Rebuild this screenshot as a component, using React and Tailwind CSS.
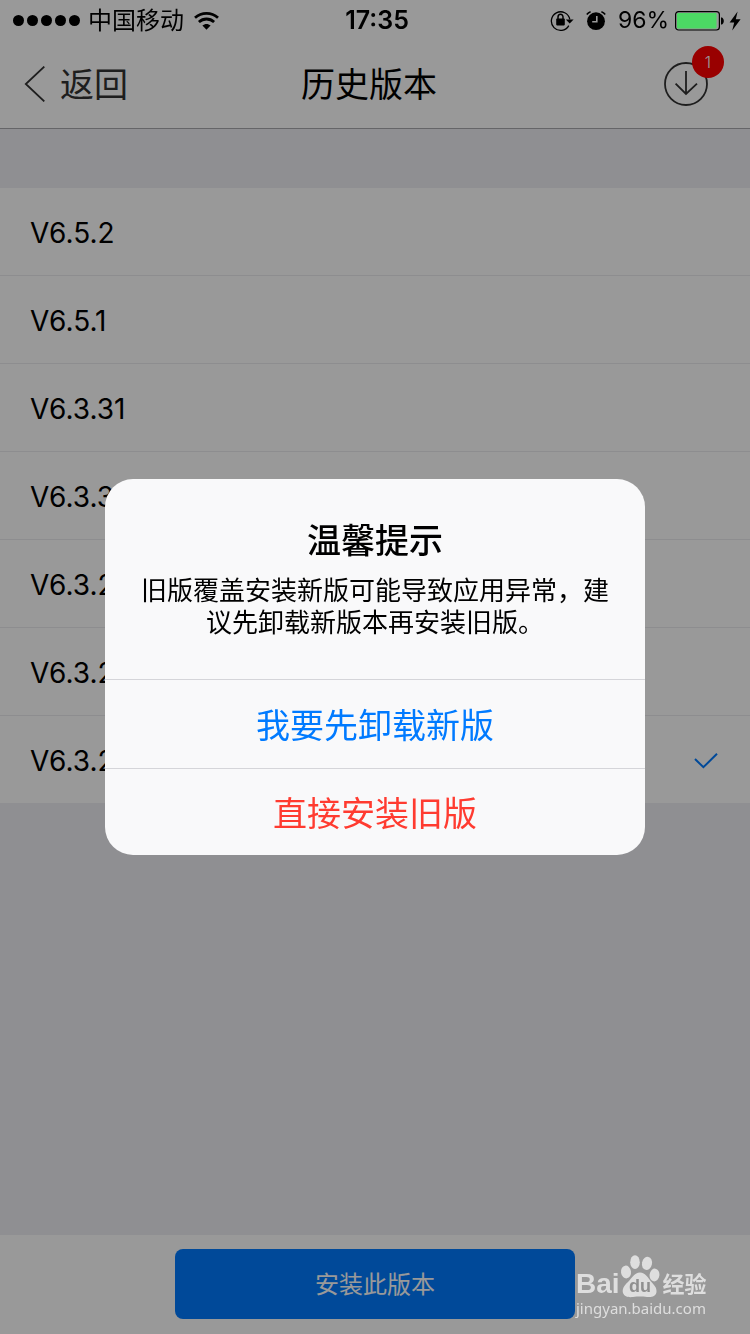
// App.jsx
const versions = ['V6.5.2', 'V6.5.1', 'V6.3.31', 'V6.3.30', 'V6.3.24', 'V6.3.23', 'V6.3.21'];
const installed = 'V6.3.21';

const StatusBar = () => {
    return (
        <div className="relative z-20 grid h-10 grid-cols-[1fr_auto_1fr] items-center pl-[13px] pr-[9px] pt-px text-2xl text-black">
            <div className="flex items-center">
                <div className="mr-2 flex gap-[3px]">
                    {[0, 1, 2, 3, 4].map((dot) => (
                        <span key={dot} className="size-[11px] rounded-full bg-black" />
                    ))}
                </div>
                <span>中国移动</span>
                <svg className="ml-[10px] h-[18px] w-[25px]" viewBox="0 0 25 18" fill="none" stroke="black" strokeWidth="2.8">
                    <path d="M1 5.8C7.5 0 17.5 0 24 5.8" />
                    <path d="M4.9 10C9.3 6 15.7 6 20.1 10" />
                    <path d="M8.4 13.6C10.8 11.3 14.2 11.3 16.6 13.6L12.5 17.8Z" fill="black" stroke="none" />
                </svg>
            </div>

            <span className="text-[25px] font-semibold">17:35</span>

            <div className="flex items-center justify-end">
                {/* Rotation lock */}
                <svg className="h-[22px] w-6" viewBox="0 0 24 22" fill="none" stroke="black" strokeWidth="1.3">
                    <path d="M18.8 15.6A9.3 9.3 0 1 1 19.8 9.4" />
                    <path d="M15.8 9.4H23.6L19.7 13.6Z" fill="black" stroke="none" />
                    <rect x="6.2" y="8.6" width="8.6" height="6.8" rx="0.8" fill="black" stroke="none" />
                    <path d="M8 9V7A2.5 2.8 0 0 1 13 7V9" strokeWidth="1.5" />
                </svg>
                {/* Alarm */}
                <svg className="ml-3 h-5 w-5" viewBox="0 0 20 20" fill="none">
                    <circle cx="10" cy="10.200" r="8.9" fill="black" />
                    <path d="M0.8 3.600A8 8 0 0 1 4.600 0.800M19.200 3.600A8 8 0 0 0 15.400 0.800" stroke="black" strokeWidth="1.6" />
                    <path d="M10.800 5V10.800H6.200" stroke="#999999" strokeWidth="1.6" />
                </svg>
                <span className="ml-3 text-[23px]">96%</span>
                {/* Battery */}
                <svg className="ml-[6px] h-5 w-[49px]" viewBox="0 0 49 20">
                    <rect x="0.6" y="0.6" width="43.8" height="18.4" rx="3" fill="none" stroke="black" strokeWidth="1.2" />
                    <rect x="2" y="2" width="39.5" height="15.6" rx="1" fill="#4cd964" />
                    <path d="M46 6.5H47C48.4 7.5 48.8 8.7 48.8 10S48.4 12.5 47 13.5H46Z" fill="black" />
                </svg>
                <svg className="ml-[5px] h-5 w-3" viewBox="0 0 12 20">
                    <path d="M8.6 0.5L0.6 11.4H5.2L3.2 19.5L11.6 8.2H6.8Z" fill="black" />
                </svg>
            </div>
        </div>
    );
};

const NavBar = () => {
    return (
        <header className="grid h-[89px] grid-cols-[1fr_auto_1fr] items-center border-b border-[#a8a8ad] pl-6 pr-9 text-[34px]">
            <button type="button" className="flex items-center gap-[14px] text-[#333333]">
                <svg className="h-9 w-[22px]" viewBox="0 0 22 36" fill="none" stroke="currentColor" strokeWidth="1.8">
                    <path d="M20.3 0.6L1.8 18L20.3 35.4" />
                </svg>
                返回
            </button>
            <h1 className="text-black">历史版本</h1>
            <button type="button" aria-label="下载" className="relative mr-[6px] size-11 justify-self-end text-[#333333]">
                <svg className="size-11" viewBox="0 0 44 44" fill="none" stroke="currentColor" strokeWidth="1.8">
                    <circle cx="22" cy="22" r="21" />
                    <path d="M22 9V32M11.6 21.6L22 32L33 21.6" />
                </svg>
                <span className="absolute -right-4 -top-4 flex size-8 items-center justify-center rounded-full bg-[#ff0000] text-base font-light text-white">
                    1
                </span>
            </button>
        </header>
    );
};

const VersionList = () => {
    return (
        <ul className="mt-[59px] bg-white">
            {versions.map((version) => (
                <li key={version} className="border-b border-[#ececee] last:border-b-0">
                    <button type="button" className="flex h-[87px] w-full items-center justify-between pl-[30px] pr-8 pt-[2px] text-[28px] text-black">
                        {version}
                        {version === installed && (
                            <svg className="h-4 w-6" viewBox="0 0 24 16" fill="none" stroke="#007aff" strokeWidth="2">
                                <path d="M1 6L9.4 14.2L23 0.8" />
                            </svg>
                        )}
                    </button>
                </li>
            ))}
        </ul>
    );
};

const Alert = () => {
    return (
        <div className="fixed inset-0 z-10 flex items-center justify-center bg-black/40">
            <div role="alertdialog" aria-labelledby="alert-title" aria-describedby="alert-text" className="w-[540px] overflow-hidden rounded-[28px] bg-[#f9f9fa] text-center">
                <div className="px-8 pb-10 pt-[42px]">
                    <h2 id="alert-title" className="text-[34px] font-medium leading-10 text-black">温馨提示</h2>
                    <p id="alert-text" className="mt-[14px] text-[26px] leading-8 text-black">
                        旧版覆盖安装新版可能导致应用异常，建议先卸载新版本再安装旧版。
                    </p>
                </div>
                <button type="button" className="h-[89px] w-full border-t border-[#d5d5d9] pt-[2px] text-[34px] text-[#007aff]">
                    我要先卸载新版
                </button>
                <button type="button" className="h-[87px] w-full border-t border-[#d5d5d9] pt-[2px] text-[34px] text-[#ff3b30]">
                    直接安装旧版
                </button>
            </div>
        </div>
    );
};

const Watermark = () => {
    return (
        <div className="fixed bottom-4 right-[42px] z-20 w-[132px] text-[#dedede]">
            <div className="flex h-11 items-end">
                <span className="font-['Liberation_Sans',sans-serif] text-[28px] font-bold leading-7">Bai</span>
                <svg className="h-[43px] w-10 shrink-0" viewBox="0 0 40 43" fill="currentColor">
                    <ellipse cx="6" cy="17" rx="5" ry="6.4" transform="rotate(-8 6 17)" />
                    <ellipse cx="15" cy="7.2" rx="4.8" ry="6.9" />
                    <ellipse cx="27" cy="8.4" rx="5" ry="6.6" transform="rotate(12 27 8.4)" />
                    <ellipse cx="34.5" cy="20" rx="4.9" ry="6.4" transform="rotate(8 34.5 20)" />
                    <path d="M20 17.500C14.500 17.500 12 23 8 27C4 30.500 2 34 3 38C4.500 42 9 42.500 13 42C18 41.400 22 41.400 27 42C32 42.600 36 41 36.500 37C37 32.500 34 30 31 26.500C28 23 25.500 17.500 20 17.500Z" />
                    <text x="20" y="37" textAnchor="middle" fontFamily="Liberation Sans, sans-serif" fontSize="18" fontWeight="bold" fill="#8f8f8f">du</text>
                </svg>
                <span className="ml-[3px] shrink-0 text-[22px] font-bold leading-7">经验</span>
            </div>
            <div className="font-['Noto_Sans',sans-serif] text-[15px] leading-5">jingyan.baidu.com</div>
        </div>
    );
};

const App = () => {
    return (
        <div className="flex min-h-screen flex-col bg-[#efeff4] font-['Inter','Noto_Sans_CJK_SC',sans-serif]">
            <div className="bg-white">
                {/* The status bar is not dimmed by the alert */}
                <StatusBar />
                <NavBar />
            </div>
            <main className="flex-1">
                <VersionList />
            </main>
            <footer className="flex justify-center bg-white pb-[15px] pt-[14px]">
                <button type="button" className="h-[70px] w-[400px] rounded-lg bg-[#007aff] pt-[2px] text-2xl text-white">
                    安装此版本
                </button>
            </footer>
            <Alert />
            <Watermark />
        </div>
    );
};

export default App;
